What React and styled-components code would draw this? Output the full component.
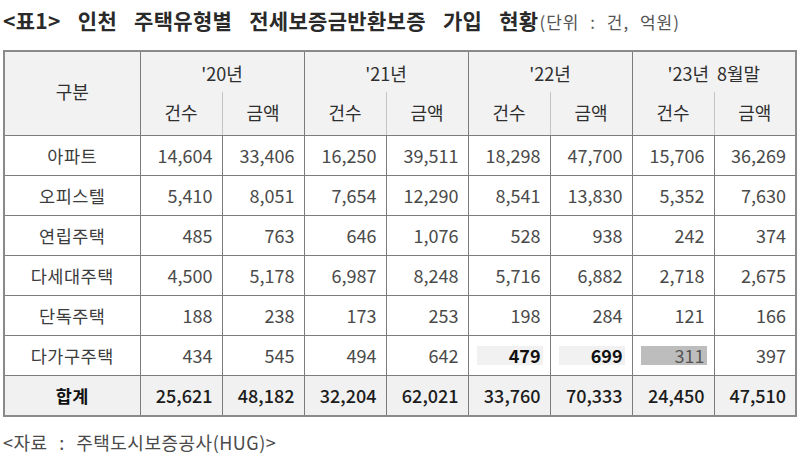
import React from 'react';
import styled, { createGlobalStyle } from 'styled-components';

const GlobalStyle = createGlobalStyle`
    body {
        margin: 0;
        background: #fff;
        font-family: "Noto Sans CJK KR", "Noto Sans", sans-serif;
    }
`

const years = ["'20년", "'21년", "'22년", "'23년 8월말"]

const rows = [
    { name: '아파트', values: ['14,604', '33,406', '16,250', '39,511', '18,298', '47,700', '15,706', '36,269'] },
    { name: '오피스텔', values: ['5,410', '8,051', '7,654', '12,290', '8,541', '13,830', '5,352', '7,630'] },
    { name: '연립주택', values: ['485', '763', '646', '1,076', '528', '938', '242', '374'] },
    { name: '다세대주택', values: ['4,500', '5,178', '6,987', '8,248', '5,716', '6,882', '2,718', '2,675'] },
    { name: '단독주택', values: ['188', '238', '173', '253', '198', '284', '121', '166'] },
    { name: '다가구주택', values: ['434', '545', '494', '642', '479', '699', '311', '397'], marks: { 4: 'light', 5: 'light', 6: 'dark' } },
]

const total = ['25,621', '48,182', '32,204', '62,021', '33,760', '70,333', '24,450', '47,510']

const App = () => {
    return (
        <Page>
            <GlobalStyle />
            <Title>
                <strong>{'<표1> 인천 주택유형별 전세보증금반환보증 가입 현황'}</strong>
                <Unit>(단위 : 건, 억원)</Unit>
            </Title>

            <Table>
                <colgroup>
                    <col style={{ width: 136 }} />
                    {total.map((_, i) => <col key={i} style={{ width: 82 }} />)}
                </colgroup>
                <thead>
                    <YearRow>
                        <HeadCell rowSpan={2}>구분</HeadCell>
                        {years.map(y => <YearCell key={y} colSpan={2}>{y}</YearCell>)}
                    </YearRow>
                    <SubRow>
                        {years.map(y => (
                            <React.Fragment key={y}>
                                <SubCell side="left">건수</SubCell>
                                <SubCell side="right">금액</SubCell>
                            </React.Fragment>
                        ))}
                    </SubRow>
                </thead>
                <tbody>
                    {rows.map(r => (
                        <BodyRow key={r.name}>
                            <NameCell>{r.name}</NameCell>
                            {r.values.map((v, i) => (
                                <NumCell key={i}>
                                    {r.marks && r.marks[i]
                                        ? <Mark tone={r.marks[i]}>{v}</Mark>
                                        : v}
                                </NumCell>
                            ))}
                        </BodyRow>
                    ))}
                    <TotalRow>
                        <NameCell bold>합계</NameCell>
                        {total.map((v, i) => <NumCell key={i}>{v}</NumCell>)}
                    </TotalRow>
                </tbody>
            </Table>

            <Source>{'<자료 : 주택도시보증공사(HUG)>'}</Source>
        </Page>
    )
}

export default App;

const Page = styled.div`
    width: 800px;
    height: 464px;
    padding: 5px 0 0 3px;
    box-sizing: border-box;
`

const Title = styled.div`
    height: 45px;
    color: #2a2a2a;
    font-size: 21px;
    line-height: 30px;
    word-spacing: 12px;
    letter-spacing: 0.3px;
    white-space: nowrap;
    strong {
        font-weight: 700;
    }
`

const Unit = styled.span`
    font-size: 17px;
    color: #555;
    word-spacing: 6px;
    letter-spacing: 1px;
    margin-left: 1px;
`

const Table = styled.table`
    border-collapse: collapse;
    table-layout: fixed;
    width: 792px;
    font-size: 18px;
    border: 2px solid #8a8a8a;
    td, th {
        border: 1px solid #7c7c7c;
        padding: 0;
    }
`

const YearRow = styled.tr`
    height: 41px;
    background: #f2f2f2;
`

const SubRow = styled.tr`
    height: 43px;
    background: #f2f2f2;
`

const HeadCell = styled.th`
    font-weight: 400;
    color: #2f2f2f;
    text-align: center;
    padding-bottom: 4px !important;
`

const YearCell = styled.th`
    font-weight: 400;
    color: #2f2f2f;
    text-align: center;
    word-spacing: 4px;
    padding-top: 2px !important;
    border-bottom-style: hidden !important;
`

const SubCell = styled.th`
    font-weight: 400;
    color: #2f2f2f;
    text-align: center;
    padding-bottom: 3px !important;
    border-top-style: hidden !important;
    ${p => p.side === 'left' ? 'border-right-color: #c4c4c4 !important;' : 'border-left-color: #c4c4c4 !important;'}
`

const BodyRow = styled.tr`
    height: 40px;
    color: #4a4a4a;
`

const TotalRow = styled.tr`
    height: 41px;
    background: #f1f1f1;
    color: #1c1c1c;
    font-weight: 500;
`

const NameCell = styled.td`
    text-align: center;
    font-size: 17.5px;
    color: ${p => p.bold ? '#111' : '#3c3c3c'};
    font-weight: ${p => p.bold ? 700 : 'inherit'};
    letter-spacing: 0.5px;
`

const NumCell = styled.td`
    text-align: right;
    padding: 0 9px 0 6px !important;
`

const Mark = styled.span`
    display: block;
    margin-right: -2px;
    margin-left: 2px;
    padding-right: 2px;
    line-height: 19px;
    background: ${p => p.tone === 'dark' ? '#bdbdbd' : '#f1f1f1'};
    color: ${p => p.tone === 'dark' ? '#555' : '#111'};
    font-weight: ${p => p.tone === 'dark' ? 400 : 700};
`

const Source = styled.div`
    margin-top: 12px;
    font-size: 18px;
    color: #4a4a4a;
    word-spacing: 7px;
    letter-spacing: 0.5px;
`
